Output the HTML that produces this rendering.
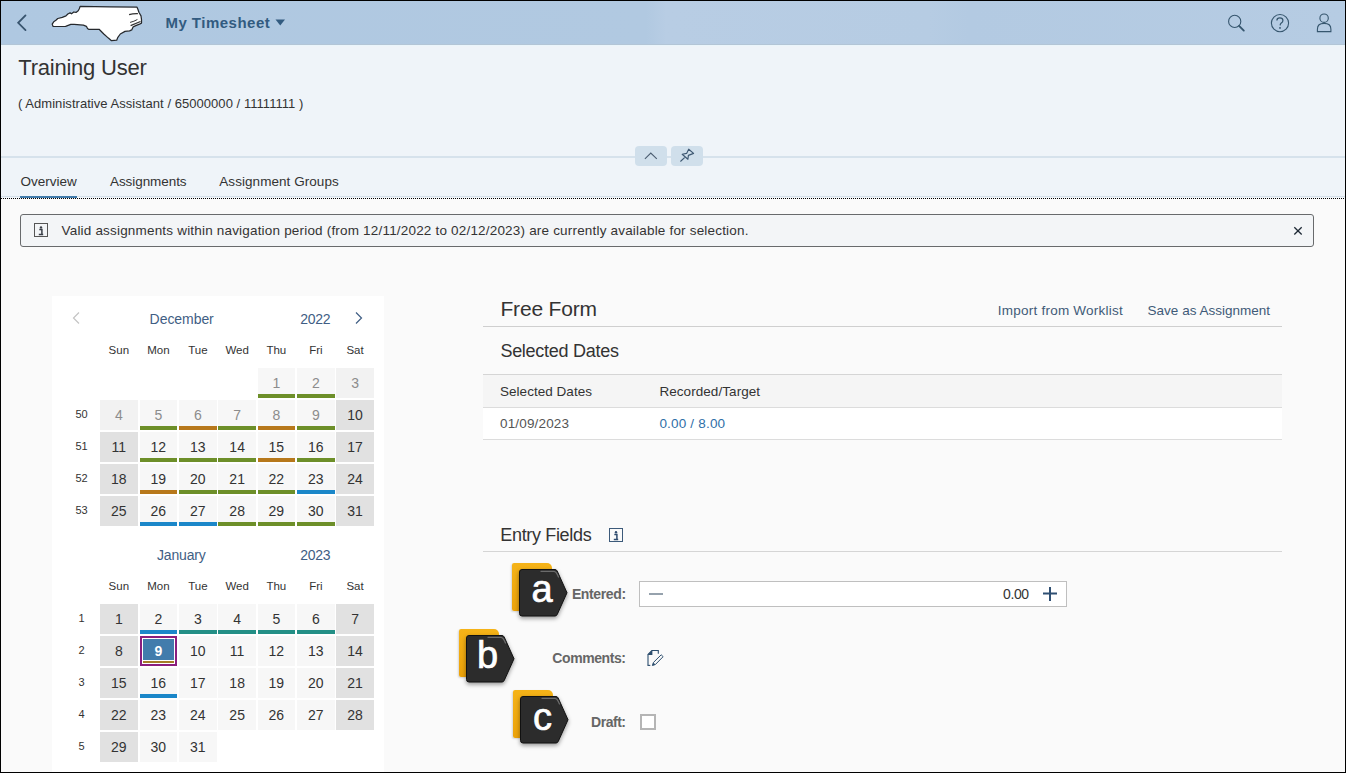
<!DOCTYPE html>
<html><head><meta charset="utf-8"><style>
html,body{margin:0;padding:0;width:1346px;height:773px;overflow:hidden;background:#fafafa;}
body{position:relative;font-family:"Liberation Sans", sans-serif;}
.t{position:absolute;white-space:nowrap;}
.r{position:absolute;}
</style></head><body>
<div class="r" style="left:0px;top:0px;width:1346px;height:773px;background:#fafafa;"></div>
<div class="r" style="left:0px;top:0px;width:1346px;height:45px;background:linear-gradient(90deg,#afc8e1 0%,#b1c9e1 48%,#b8cde4 49.5%,#b6cce3 69%,#b3cae2 72%,#b6cce3 100%);"></div>
<div class="r" style="left:0px;top:45px;width:1346px;height:153px;background:#eff4f9;"></div>
<div class="r" style="left:0px;top:44px;width:1346px;height:1px;background:#b3c5d6;"></div>
<div class="r" style="left:0px;top:45px;width:1346px;height:1px;background:#eaf5fb;"></div>
<div class="r" style="left:0px;top:196px;width:1346px;height:1px;background:#d5e0ea;"></div>
<div class="r" style="left:0px;top:156px;width:1346px;height:2px;background:#d6e2ec;"></div>
<div class="r" style="left:635px;top:146px;width:32px;height:20px;background:#d0dfeb;border-radius:4px;"></div>
<div class="r" style="left:671px;top:146px;width:32px;height:20px;background:#d0dfeb;border-radius:4px;"></div>
<div class="r" style="left:20px;top:196px;width:57px;height:2px;background:#427cac;"></div>
<div class="r" style="left:0;top:198px;width:1346px;height:0;border-top:1px dotted #000;"></div>
<svg class="r" style="left:8px;top:8px" width="30" height="30" viewBox="8 8 30 30"><path d="M25.5 15.4 L18.2 22.8 L25.5 30.1" fill="none" stroke="#38546e" stroke-width="1.8" stroke-linecap="round"/></svg>
<svg class="r" style="left:0;top:0" width="160" height="45"><polygon points="80.1,6.4 110.0,6.9 136.9,7.1 137.9,9.2 138.9,12.3 141.0,15.9 141.5,19.5 141.5,23.1 139.5,24.2 135.8,25.7 133.2,26.8 131.7,29.9 129.6,30.9 125.0,31.4 120.3,34.0 117.7,37.6 116.7,40.2 111.5,40.7 108.4,38.1 103.8,34.0 99.1,29.3 88.6,29.3 87.5,28.5 86.4,26.3 83.4,25.2 74.1,24.4 70.8,24.4 65.6,26.3 57.4,26.5 53.0,26.3 52.2,24.1 53.7,21.8 55.9,20.3 57.8,18.5 62.3,17.4 66.0,15.9 67.8,14.0 70.1,12.9 71.5,13.8 73.8,12.0 76.0,12.4 78.2,10.7 79.3,8.8" fill="#fff" stroke="#26292d" stroke-width="1.25" stroke-linejoin="round"/><path d="M129.1 14.6 Q133 13.4 137.9 13.6" fill="none" stroke="#333" stroke-width="1.2"/><path d="M130.1 22.4 Q134 21.5 137.4 19.5" fill="none" stroke="#333" stroke-width="1"/><path d="M130.6 25.6 L140.5 21.5" fill="none" stroke="#333" stroke-width="1.3"/></svg>
<div class="t" style="left:165.4px;top:15.40px;font-size:15px;line-height:15px;color:#325b80;font-weight:bold;letter-spacing:0.491px;">My Timesheet</div>
<svg class="r" style="left:275px;top:19px" width="11" height="8"><path d="M0.5 0.5 L10 0.5 L5.25 6.5 Z" fill="#325b80"/></svg>
<svg class="r" style="left:1220px;top:8px" width="120" height="30" viewBox="1220 8 120 30"><circle cx="1234.7" cy="21.4" r="6.1" fill="none" stroke="#36566e" stroke-width="1.1"/><path d="M1239.1 25.9 L1243.8 30.6" stroke="#36566e" stroke-width="1.9" stroke-linecap="round"/><circle cx="1280" cy="23.1" r="8.6" fill="none" stroke="#36566e" stroke-width="1.1"/><path d="M1276.9 20.6 Q1276.9 17.9 1279.8 17.9 Q1282.9 17.9 1282.9 20.4 Q1282.9 22 1281.3 23.1 Q1280.2 23.9 1280.1 25.4" fill="none" stroke="#36566e" stroke-width="1.25"/><circle cx="1280" cy="27.9" r="0.9" fill="#36566e"/><circle cx="1324.1" cy="18.2" r="4.2" fill="none" stroke="#36566e" stroke-width="1.1"/><path d="M1317.4 31.6 L1317.4 29.2 Q1317.4 23.4 1324.1 23.4 Q1330.9 23.4 1330.9 29.2 L1330.9 31.6 Z" fill="none" stroke="#36566e" stroke-width="1.1"/></svg>
<div class="t" style="left:18.3px;top:56.58px;font-size:22px;line-height:22px;color:#333;letter-spacing:-0.233px;">Training User</div>
<div class="t" style="left:18.0px;top:96.70px;font-size:13px;line-height:13px;color:#333;letter-spacing:0.047px;">( Administrative Assistant / 65000000 / 11111111 )</div>
<svg class="r" style="left:630px;top:140px" width="80" height="30" viewBox="630 140 80 30"><path d="M644.9 158.8 L650.8 153 L656.8 158.8" fill="none" stroke="#4b5d70" stroke-width="1.1"/><path d="M682.2 154.3 L686.6 153.4 L688.7 149.2 L693.6 153.4 L688.4 155.4 L687.9 159.3 Z M680.4 161.5 L685.1 157.1" fill="none" stroke="#3e5872" stroke-width="1.15" stroke-linejoin="round"/></svg>
<div class="t" style="left:20.4px;top:174.77px;font-size:13.5px;line-height:13.5px;color:#333;letter-spacing:0.029px;">Overview</div>
<div class="t" style="left:110.0px;top:174.77px;font-size:13.5px;line-height:13.5px;color:#333;letter-spacing:-0.07px;">Assignments</div>
<div class="t" style="left:219.3px;top:174.77px;font-size:13.5px;line-height:13.5px;color:#333;letter-spacing:0.056px;">Assignment Groups</div>
<div class="r" style="left:20px;top:214px;width:1294px;height:33px;background:#f3f5f7;box-sizing:border-box;border:1px solid #686a6c;border-radius:3px;"></div>
<div class="r" style="left:34px;top:223px;width:14px;height:14px;box-sizing:border-box;border:1.3px solid #555;"></div>
<svg class="r" style="left:0;top:0" width="60" height="250" viewBox="0 0 60 250"><circle cx="41" cy="227.4" r="1.2" fill="#3a3f48"/><path d="M39.3 229.6 L41.9 229.6 L41.9 234.3 M38.8 234.6 L43.2 234.6" fill="none" stroke="#3a3f48" stroke-width="1.5"/></svg>
<div class="t" style="left:61.5px;top:223.67px;font-size:13.5px;line-height:13.5px;color:#333;letter-spacing:0.188px;">Valid assignments within navigation period (from 12/11/2022 to 02/12/2023) are currently available for selection.</div>
<svg class="r" style="left:1290px;top:224px" width="16" height="14" viewBox="1290 224 16 14"><path d="M1294.3 227.3 L1301.7 234.5 M1301.7 227.3 L1294.3 234.5" stroke="#1f2a36" stroke-width="1.3"/></svg>
<div class="r" style="left:52px;top:296px;width:332px;height:477px;background:#ffffff;"></div>
<div class="t" style="left:149.6px;top:312.25px;font-size:14px;line-height:14px;color:#3f5e84;letter-spacing:-0.057px;">December</div>
<div class="t" style="left:300.3px;top:312.25px;font-size:14px;line-height:14px;color:#3f5e84;letter-spacing:-0.333px;">2022</div>
<div class="t" style="left:18.849999999999994px;width:200px;text-align:center;top:345.47px;font-size:11.5px;line-height:11.5px;color:#333;">Sun</div>
<div class="t" style="left:58.349999999999994px;width:200px;text-align:center;top:345.47px;font-size:11.5px;line-height:11.5px;color:#333;">Mon</div>
<div class="t" style="left:97.85px;width:200px;text-align:center;top:345.47px;font-size:11.5px;line-height:11.5px;color:#333;">Tue</div>
<div class="t" style="left:137.15px;width:200px;text-align:center;top:345.47px;font-size:11.5px;line-height:11.5px;color:#333;">Wed</div>
<div class="t" style="left:176.35000000000002px;width:200px;text-align:center;top:345.47px;font-size:11.5px;line-height:11.5px;color:#333;">Thu</div>
<div class="t" style="left:215.85000000000002px;width:200px;text-align:center;top:345.47px;font-size:11.5px;line-height:11.5px;color:#333;">Fri</div>
<div class="t" style="left:255.05px;width:200px;text-align:center;top:345.47px;font-size:11.5px;line-height:11.5px;color:#333;">Sat</div>
<div class="r" style="left:257.5px;top:368.1px;width:37.7px;height:30px;background:#f7f7f7;"></div>
<div class="r" style="left:257.5px;top:394.1px;width:37.7px;height:4px;background:#6d8f29;"></div>
<div class="t" style="left:176.35000000000002px;width:200px;text-align:center;top:376.05px;font-size:14px;line-height:14px;color:#8c8c8c;">1</div>
<div class="r" style="left:297px;top:368.1px;width:37.7px;height:30px;background:#f7f7f7;"></div>
<div class="r" style="left:297px;top:394.1px;width:37.7px;height:4px;background:#6d8f29;"></div>
<div class="t" style="left:215.85000000000002px;width:200px;text-align:center;top:376.05px;font-size:14px;line-height:14px;color:#8c8c8c;">2</div>
<div class="r" style="left:336.2px;top:368.1px;width:37.7px;height:30px;background:#f2f2f2;"></div>
<div class="t" style="left:255.05px;width:200px;text-align:center;top:376.05px;font-size:14px;line-height:14px;color:#8c8c8c;">3</div>
<div class="t" style="left:-18.5px;width:200px;text-align:center;top:408.99px;font-size:11px;line-height:11px;color:#333;">50</div>
<div class="r" style="left:100px;top:400.1px;width:37.7px;height:30px;background:#f2f2f2;"></div>
<div class="t" style="left:18.849999999999994px;width:200px;text-align:center;top:408.05px;font-size:14px;line-height:14px;color:#8c8c8c;">4</div>
<div class="r" style="left:139.5px;top:400.1px;width:37.7px;height:30px;background:#f7f7f7;"></div>
<div class="r" style="left:139.5px;top:426.1px;width:37.7px;height:4px;background:#6d8f29;"></div>
<div class="t" style="left:58.349999999999994px;width:200px;text-align:center;top:408.05px;font-size:14px;line-height:14px;color:#8c8c8c;">5</div>
<div class="r" style="left:179px;top:400.1px;width:37.7px;height:30px;background:#f7f7f7;"></div>
<div class="r" style="left:179px;top:426.1px;width:37.7px;height:4px;background:#b7781b;"></div>
<div class="t" style="left:97.85px;width:200px;text-align:center;top:408.05px;font-size:14px;line-height:14px;color:#8c8c8c;">6</div>
<div class="r" style="left:218.3px;top:400.1px;width:37.7px;height:30px;background:#f7f7f7;"></div>
<div class="r" style="left:218.3px;top:426.1px;width:37.7px;height:4px;background:#6d8f29;"></div>
<div class="t" style="left:137.15px;width:200px;text-align:center;top:408.05px;font-size:14px;line-height:14px;color:#8c8c8c;">7</div>
<div class="r" style="left:257.5px;top:400.1px;width:37.7px;height:30px;background:#f7f7f7;"></div>
<div class="r" style="left:257.5px;top:426.1px;width:37.7px;height:4px;background:#b7781b;"></div>
<div class="t" style="left:176.35000000000002px;width:200px;text-align:center;top:408.05px;font-size:14px;line-height:14px;color:#8c8c8c;">8</div>
<div class="r" style="left:297px;top:400.1px;width:37.7px;height:30px;background:#f7f7f7;"></div>
<div class="r" style="left:297px;top:426.1px;width:37.7px;height:4px;background:#6d8f29;"></div>
<div class="t" style="left:215.85000000000002px;width:200px;text-align:center;top:408.05px;font-size:14px;line-height:14px;color:#8c8c8c;">9</div>
<div class="r" style="left:336.2px;top:400.1px;width:37.7px;height:30px;background:#e1e1e1;"></div>
<div class="t" style="left:255.05px;width:200px;text-align:center;top:408.05px;font-size:14px;line-height:14px;color:#333;">10</div>
<div class="t" style="left:-18.5px;width:200px;text-align:center;top:440.99px;font-size:11px;line-height:11px;color:#333;">51</div>
<div class="r" style="left:100px;top:432.1px;width:37.7px;height:30px;background:#e1e1e1;"></div>
<div class="t" style="left:18.849999999999994px;width:200px;text-align:center;top:440.05px;font-size:14px;line-height:14px;color:#333;">11</div>
<div class="r" style="left:139.5px;top:432.1px;width:37.7px;height:30px;background:#f7f7f7;"></div>
<div class="r" style="left:139.5px;top:458.1px;width:37.7px;height:4px;background:#6d8f29;"></div>
<div class="t" style="left:58.349999999999994px;width:200px;text-align:center;top:440.05px;font-size:14px;line-height:14px;color:#333;">12</div>
<div class="r" style="left:179px;top:432.1px;width:37.7px;height:30px;background:#f7f7f7;"></div>
<div class="r" style="left:179px;top:458.1px;width:37.7px;height:4px;background:#6d8f29;"></div>
<div class="t" style="left:97.85px;width:200px;text-align:center;top:440.05px;font-size:14px;line-height:14px;color:#333;">13</div>
<div class="r" style="left:218.3px;top:432.1px;width:37.7px;height:30px;background:#f7f7f7;"></div>
<div class="r" style="left:218.3px;top:458.1px;width:37.7px;height:4px;background:#6d8f29;"></div>
<div class="t" style="left:137.15px;width:200px;text-align:center;top:440.05px;font-size:14px;line-height:14px;color:#333;">14</div>
<div class="r" style="left:257.5px;top:432.1px;width:37.7px;height:30px;background:#f7f7f7;"></div>
<div class="r" style="left:257.5px;top:458.1px;width:37.7px;height:4px;background:#b7781b;"></div>
<div class="t" style="left:176.35000000000002px;width:200px;text-align:center;top:440.05px;font-size:14px;line-height:14px;color:#333;">15</div>
<div class="r" style="left:297px;top:432.1px;width:37.7px;height:30px;background:#f7f7f7;"></div>
<div class="r" style="left:297px;top:458.1px;width:37.7px;height:4px;background:#6d8f29;"></div>
<div class="t" style="left:215.85000000000002px;width:200px;text-align:center;top:440.05px;font-size:14px;line-height:14px;color:#333;">16</div>
<div class="r" style="left:336.2px;top:432.1px;width:37.7px;height:30px;background:#e1e1e1;"></div>
<div class="t" style="left:255.05px;width:200px;text-align:center;top:440.05px;font-size:14px;line-height:14px;color:#333;">17</div>
<div class="t" style="left:-18.5px;width:200px;text-align:center;top:472.99px;font-size:11px;line-height:11px;color:#333;">52</div>
<div class="r" style="left:100px;top:464.1px;width:37.7px;height:30px;background:#e1e1e1;"></div>
<div class="t" style="left:18.849999999999994px;width:200px;text-align:center;top:472.05px;font-size:14px;line-height:14px;color:#333;">18</div>
<div class="r" style="left:139.5px;top:464.1px;width:37.7px;height:30px;background:#f7f7f7;"></div>
<div class="r" style="left:139.5px;top:490.1px;width:37.7px;height:4px;background:#b7781b;"></div>
<div class="t" style="left:58.349999999999994px;width:200px;text-align:center;top:472.05px;font-size:14px;line-height:14px;color:#333;">19</div>
<div class="r" style="left:179px;top:464.1px;width:37.7px;height:30px;background:#f7f7f7;"></div>
<div class="r" style="left:179px;top:490.1px;width:37.7px;height:4px;background:#6d8f29;"></div>
<div class="t" style="left:97.85px;width:200px;text-align:center;top:472.05px;font-size:14px;line-height:14px;color:#333;">20</div>
<div class="r" style="left:218.3px;top:464.1px;width:37.7px;height:30px;background:#f7f7f7;"></div>
<div class="r" style="left:218.3px;top:490.1px;width:37.7px;height:4px;background:#6d8f29;"></div>
<div class="t" style="left:137.15px;width:200px;text-align:center;top:472.05px;font-size:14px;line-height:14px;color:#333;">21</div>
<div class="r" style="left:257.5px;top:464.1px;width:37.7px;height:30px;background:#f7f7f7;"></div>
<div class="r" style="left:257.5px;top:490.1px;width:37.7px;height:4px;background:#6d8f29;"></div>
<div class="t" style="left:176.35000000000002px;width:200px;text-align:center;top:472.05px;font-size:14px;line-height:14px;color:#333;">22</div>
<div class="r" style="left:297px;top:464.1px;width:37.7px;height:30px;background:#f7f7f7;"></div>
<div class="r" style="left:297px;top:490.1px;width:37.7px;height:4px;background:#1b87c9;"></div>
<div class="t" style="left:215.85000000000002px;width:200px;text-align:center;top:472.05px;font-size:14px;line-height:14px;color:#333;">23</div>
<div class="r" style="left:336.2px;top:464.1px;width:37.7px;height:30px;background:#e1e1e1;"></div>
<div class="t" style="left:255.05px;width:200px;text-align:center;top:472.05px;font-size:14px;line-height:14px;color:#333;">24</div>
<div class="t" style="left:-18.5px;width:200px;text-align:center;top:504.99px;font-size:11px;line-height:11px;color:#333;">53</div>
<div class="r" style="left:100px;top:496.1px;width:37.7px;height:30px;background:#e1e1e1;"></div>
<div class="t" style="left:18.849999999999994px;width:200px;text-align:center;top:504.05px;font-size:14px;line-height:14px;color:#333;">25</div>
<div class="r" style="left:139.5px;top:496.1px;width:37.7px;height:30px;background:#f7f7f7;"></div>
<div class="r" style="left:139.5px;top:522.1px;width:37.7px;height:4px;background:#1b87c9;"></div>
<div class="t" style="left:58.349999999999994px;width:200px;text-align:center;top:504.05px;font-size:14px;line-height:14px;color:#333;">26</div>
<div class="r" style="left:179px;top:496.1px;width:37.7px;height:30px;background:#f7f7f7;"></div>
<div class="r" style="left:179px;top:522.1px;width:37.7px;height:4px;background:#1b87c9;"></div>
<div class="t" style="left:97.85px;width:200px;text-align:center;top:504.05px;font-size:14px;line-height:14px;color:#333;">27</div>
<div class="r" style="left:218.3px;top:496.1px;width:37.7px;height:30px;background:#f7f7f7;"></div>
<div class="r" style="left:218.3px;top:522.1px;width:37.7px;height:4px;background:#6d8f29;"></div>
<div class="t" style="left:137.15px;width:200px;text-align:center;top:504.05px;font-size:14px;line-height:14px;color:#333;">28</div>
<div class="r" style="left:257.5px;top:496.1px;width:37.7px;height:30px;background:#f7f7f7;"></div>
<div class="r" style="left:257.5px;top:522.1px;width:37.7px;height:4px;background:#6d8f29;"></div>
<div class="t" style="left:176.35000000000002px;width:200px;text-align:center;top:504.05px;font-size:14px;line-height:14px;color:#333;">29</div>
<div class="r" style="left:297px;top:496.1px;width:37.7px;height:30px;background:#f7f7f7;"></div>
<div class="r" style="left:297px;top:522.1px;width:37.7px;height:4px;background:#6d8f29;"></div>
<div class="t" style="left:215.85000000000002px;width:200px;text-align:center;top:504.05px;font-size:14px;line-height:14px;color:#333;">30</div>
<div class="r" style="left:336.2px;top:496.1px;width:37.7px;height:30px;background:#e1e1e1;"></div>
<div class="t" style="left:255.05px;width:200px;text-align:center;top:504.05px;font-size:14px;line-height:14px;color:#333;">31</div>
<div class="t" style="left:157.0px;top:548.15px;font-size:14px;line-height:14px;color:#3f5e84;letter-spacing:-0.183px;">January</div>
<div class="t" style="left:300.3px;top:548.15px;font-size:14px;line-height:14px;color:#3f5e84;letter-spacing:-0.333px;">2023</div>
<div class="t" style="left:18.849999999999994px;width:200px;text-align:center;top:581.37px;font-size:11.5px;line-height:11.5px;color:#333;">Sun</div>
<div class="t" style="left:58.349999999999994px;width:200px;text-align:center;top:581.37px;font-size:11.5px;line-height:11.5px;color:#333;">Mon</div>
<div class="t" style="left:97.85px;width:200px;text-align:center;top:581.37px;font-size:11.5px;line-height:11.5px;color:#333;">Tue</div>
<div class="t" style="left:137.15px;width:200px;text-align:center;top:581.37px;font-size:11.5px;line-height:11.5px;color:#333;">Wed</div>
<div class="t" style="left:176.35000000000002px;width:200px;text-align:center;top:581.37px;font-size:11.5px;line-height:11.5px;color:#333;">Thu</div>
<div class="t" style="left:215.85000000000002px;width:200px;text-align:center;top:581.37px;font-size:11.5px;line-height:11.5px;color:#333;">Fri</div>
<div class="t" style="left:255.05px;width:200px;text-align:center;top:581.37px;font-size:11.5px;line-height:11.5px;color:#333;">Sat</div>
<div class="t" style="left:-18.5px;width:200px;text-align:center;top:612.89px;font-size:11px;line-height:11px;color:#333;">1</div>
<div class="r" style="left:100px;top:604px;width:37.7px;height:30px;background:#e1e1e1;"></div>
<div class="t" style="left:18.849999999999994px;width:200px;text-align:center;top:611.95px;font-size:14px;line-height:14px;color:#333;">1</div>
<div class="r" style="left:139.5px;top:604px;width:37.7px;height:30px;background:#f7f7f7;"></div>
<div class="r" style="left:139.5px;top:630px;width:37.7px;height:4px;background:#1b87c9;"></div>
<div class="t" style="left:58.349999999999994px;width:200px;text-align:center;top:611.95px;font-size:14px;line-height:14px;color:#333;">2</div>
<div class="r" style="left:179px;top:604px;width:37.7px;height:30px;background:#f7f7f7;"></div>
<div class="r" style="left:179px;top:630px;width:37.7px;height:4px;background:#238f86;"></div>
<div class="t" style="left:97.85px;width:200px;text-align:center;top:611.95px;font-size:14px;line-height:14px;color:#333;">3</div>
<div class="r" style="left:218.3px;top:604px;width:37.7px;height:30px;background:#f7f7f7;"></div>
<div class="r" style="left:218.3px;top:630px;width:37.7px;height:4px;background:#238f86;"></div>
<div class="t" style="left:137.15px;width:200px;text-align:center;top:611.95px;font-size:14px;line-height:14px;color:#333;">4</div>
<div class="r" style="left:257.5px;top:604px;width:37.7px;height:30px;background:#f7f7f7;"></div>
<div class="r" style="left:257.5px;top:630px;width:37.7px;height:4px;background:#238f86;"></div>
<div class="t" style="left:176.35000000000002px;width:200px;text-align:center;top:611.95px;font-size:14px;line-height:14px;color:#333;">5</div>
<div class="r" style="left:297px;top:604px;width:37.7px;height:30px;background:#f7f7f7;"></div>
<div class="r" style="left:297px;top:630px;width:37.7px;height:4px;background:#238f86;"></div>
<div class="t" style="left:215.85000000000002px;width:200px;text-align:center;top:611.95px;font-size:14px;line-height:14px;color:#333;">6</div>
<div class="r" style="left:336.2px;top:604px;width:37.7px;height:30px;background:#e1e1e1;"></div>
<div class="t" style="left:255.05px;width:200px;text-align:center;top:611.95px;font-size:14px;line-height:14px;color:#333;">7</div>
<div class="t" style="left:-18.5px;width:200px;text-align:center;top:644.89px;font-size:11px;line-height:11px;color:#333;">2</div>
<div class="r" style="left:100px;top:636px;width:37.7px;height:30px;background:#e1e1e1;"></div>
<div class="t" style="left:18.849999999999994px;width:200px;text-align:center;top:643.95px;font-size:14px;line-height:14px;color:#333;">8</div>
<div class="r" style="left:139.5px;top:636px;width:37.7px;height:30px;background:#f7f7f7;"></div>
<div class="r" style="left:139.5px;top:636px;width:37.7px;height:30px;box-sizing:border-box;border:2px solid #8a1e7e;background:#fff;"></div>
<div class="r" style="left:142.5px;top:639px;width:31.700000000000003px;height:21px;background:#427cac;"></div>
<div class="r" style="left:142.5px;top:661px;width:31.700000000000003px;height:2px;background:#a57d27;"></div>
<div class="t" style="left:58.349999999999994px;width:200px;text-align:center;top:643.95px;font-size:14px;line-height:14px;color:#fff;font-weight:bold;">9</div>
<div class="r" style="left:179px;top:636px;width:37.7px;height:30px;background:#f7f7f7;"></div>
<div class="t" style="left:97.85px;width:200px;text-align:center;top:643.95px;font-size:14px;line-height:14px;color:#333;">10</div>
<div class="r" style="left:218.3px;top:636px;width:37.7px;height:30px;background:#f7f7f7;"></div>
<div class="t" style="left:137.15px;width:200px;text-align:center;top:643.95px;font-size:14px;line-height:14px;color:#333;">11</div>
<div class="r" style="left:257.5px;top:636px;width:37.7px;height:30px;background:#f7f7f7;"></div>
<div class="t" style="left:176.35000000000002px;width:200px;text-align:center;top:643.95px;font-size:14px;line-height:14px;color:#333;">12</div>
<div class="r" style="left:297px;top:636px;width:37.7px;height:30px;background:#f7f7f7;"></div>
<div class="t" style="left:215.85000000000002px;width:200px;text-align:center;top:643.95px;font-size:14px;line-height:14px;color:#333;">13</div>
<div class="r" style="left:336.2px;top:636px;width:37.7px;height:30px;background:#e1e1e1;"></div>
<div class="t" style="left:255.05px;width:200px;text-align:center;top:643.95px;font-size:14px;line-height:14px;color:#333;">14</div>
<div class="t" style="left:-18.5px;width:200px;text-align:center;top:676.89px;font-size:11px;line-height:11px;color:#333;">3</div>
<div class="r" style="left:100px;top:668px;width:37.7px;height:30px;background:#e1e1e1;"></div>
<div class="t" style="left:18.849999999999994px;width:200px;text-align:center;top:675.95px;font-size:14px;line-height:14px;color:#333;">15</div>
<div class="r" style="left:139.5px;top:668px;width:37.7px;height:30px;background:#f7f7f7;"></div>
<div class="r" style="left:139.5px;top:694px;width:37.7px;height:4px;background:#1b87c9;"></div>
<div class="t" style="left:58.349999999999994px;width:200px;text-align:center;top:675.95px;font-size:14px;line-height:14px;color:#333;">16</div>
<div class="r" style="left:179px;top:668px;width:37.7px;height:30px;background:#f7f7f7;"></div>
<div class="t" style="left:97.85px;width:200px;text-align:center;top:675.95px;font-size:14px;line-height:14px;color:#333;">17</div>
<div class="r" style="left:218.3px;top:668px;width:37.7px;height:30px;background:#f7f7f7;"></div>
<div class="t" style="left:137.15px;width:200px;text-align:center;top:675.95px;font-size:14px;line-height:14px;color:#333;">18</div>
<div class="r" style="left:257.5px;top:668px;width:37.7px;height:30px;background:#f7f7f7;"></div>
<div class="t" style="left:176.35000000000002px;width:200px;text-align:center;top:675.95px;font-size:14px;line-height:14px;color:#333;">19</div>
<div class="r" style="left:297px;top:668px;width:37.7px;height:30px;background:#f7f7f7;"></div>
<div class="t" style="left:215.85000000000002px;width:200px;text-align:center;top:675.95px;font-size:14px;line-height:14px;color:#333;">20</div>
<div class="r" style="left:336.2px;top:668px;width:37.7px;height:30px;background:#e1e1e1;"></div>
<div class="t" style="left:255.05px;width:200px;text-align:center;top:675.95px;font-size:14px;line-height:14px;color:#333;">21</div>
<div class="t" style="left:-18.5px;width:200px;text-align:center;top:708.89px;font-size:11px;line-height:11px;color:#333;">4</div>
<div class="r" style="left:100px;top:700px;width:37.7px;height:30px;background:#e1e1e1;"></div>
<div class="t" style="left:18.849999999999994px;width:200px;text-align:center;top:707.95px;font-size:14px;line-height:14px;color:#333;">22</div>
<div class="r" style="left:139.5px;top:700px;width:37.7px;height:30px;background:#f7f7f7;"></div>
<div class="t" style="left:58.349999999999994px;width:200px;text-align:center;top:707.95px;font-size:14px;line-height:14px;color:#333;">23</div>
<div class="r" style="left:179px;top:700px;width:37.7px;height:30px;background:#f7f7f7;"></div>
<div class="t" style="left:97.85px;width:200px;text-align:center;top:707.95px;font-size:14px;line-height:14px;color:#333;">24</div>
<div class="r" style="left:218.3px;top:700px;width:37.7px;height:30px;background:#f7f7f7;"></div>
<div class="t" style="left:137.15px;width:200px;text-align:center;top:707.95px;font-size:14px;line-height:14px;color:#333;">25</div>
<div class="r" style="left:257.5px;top:700px;width:37.7px;height:30px;background:#f7f7f7;"></div>
<div class="t" style="left:176.35000000000002px;width:200px;text-align:center;top:707.95px;font-size:14px;line-height:14px;color:#333;">26</div>
<div class="r" style="left:297px;top:700px;width:37.7px;height:30px;background:#f7f7f7;"></div>
<div class="t" style="left:215.85000000000002px;width:200px;text-align:center;top:707.95px;font-size:14px;line-height:14px;color:#333;">27</div>
<div class="r" style="left:336.2px;top:700px;width:37.7px;height:30px;background:#e1e1e1;"></div>
<div class="t" style="left:255.05px;width:200px;text-align:center;top:707.95px;font-size:14px;line-height:14px;color:#333;">28</div>
<div class="t" style="left:-18.5px;width:200px;text-align:center;top:740.89px;font-size:11px;line-height:11px;color:#333;">5</div>
<div class="r" style="left:100px;top:732px;width:37.7px;height:30px;background:#e1e1e1;"></div>
<div class="t" style="left:18.849999999999994px;width:200px;text-align:center;top:739.95px;font-size:14px;line-height:14px;color:#333;">29</div>
<div class="r" style="left:139.5px;top:732px;width:37.7px;height:30px;background:#f7f7f7;"></div>
<div class="t" style="left:58.349999999999994px;width:200px;text-align:center;top:739.95px;font-size:14px;line-height:14px;color:#333;">30</div>
<div class="r" style="left:179px;top:732px;width:37.7px;height:30px;background:#f7f7f7;"></div>
<div class="t" style="left:97.85px;width:200px;text-align:center;top:739.95px;font-size:14px;line-height:14px;color:#333;">31</div>
<svg class="r" style="left:70px;top:310px" width="12" height="16"><path d="M9 2.5 L3.5 8 L9 13.5" fill="none" stroke="#c4c4c4" stroke-width="1.2"/></svg>
<svg class="r" style="left:353px;top:310px" width="12" height="16"><path d="M3 2.5 L8.5 8 L3 13.5" fill="none" stroke="#3f5e84" stroke-width="1.2"/></svg>
<div class="t" style="left:500.4px;top:298.02px;font-size:21px;line-height:21px;color:#333;letter-spacing:-0.162px;">Free Form</div>
<div class="t" style="left:997.8px;top:304.07px;font-size:13.5px;line-height:13.5px;color:#3f5a78;letter-spacing:0.232px;">Import from Worklist</div>
<div class="t" style="left:1147.6px;top:304.07px;font-size:13.5px;line-height:13.5px;color:#3f5a78;letter-spacing:0.006px;">Save as Assignment</div>
<div class="r" style="left:483px;top:326px;width:799px;height:1px;background:#cfcfcf;"></div>
<div class="t" style="left:500.4px;top:342.06px;font-size:18px;line-height:18px;color:#333;letter-spacing:-0.269px;">Selected Dates</div>
<div class="r" style="left:483px;top:374px;width:799px;height:1px;background:#d5d5d5;"></div>
<div class="r" style="left:483px;top:375px;width:799px;height:32px;background:#f5f5f5;"></div>
<div class="r" style="left:483px;top:407px;width:799px;height:1px;background:#dcdcdc;"></div>
<div class="r" style="left:483px;top:408px;width:799px;height:31px;background:#ffffff;"></div>
<div class="r" style="left:483px;top:439px;width:799px;height:1px;background:#dcdcdc;"></div>
<div class="t" style="left:500.0px;top:385.27px;font-size:13.5px;line-height:13.5px;color:#333;letter-spacing:0.031px;">Selected Dates</div>
<div class="t" style="left:659.4px;top:385.27px;font-size:13.5px;line-height:13.5px;color:#333;letter-spacing:0.064px;">Recorded/Target</div>
<div class="t" style="left:500.0px;top:416.87px;font-size:13.5px;line-height:13.5px;color:#555;letter-spacing:0.156px;">01/09/2023</div>
<div class="t" style="left:659.4px;top:416.87px;font-size:13.5px;line-height:13.5px;color:#2f6fa8;letter-spacing:0.19px;">0.00 / 8.00</div>
<div class="t" style="left:500.3px;top:525.66px;font-size:18px;line-height:18px;color:#333;letter-spacing:-0.336px;">Entry Fields</div>
<div class="r" style="left:609px;top:528px;width:14px;height:14px;box-sizing:border-box;border:1.3px solid #3c5a7a;"></div>
<svg class="r" style="left:590px;top:520px" width="40" height="30" viewBox="590 520 40 30"><circle cx="616" cy="532.2" r="1.2" fill="#2f4b6e"/><path d="M614.3 534.4 L616.9 534.4 L616.9 539.3 M613.8 539.6 L618.2 539.6" fill="none" stroke="#2f4b6e" stroke-width="1.5"/></svg>
<div class="r" style="left:483px;top:551px;width:799px;height:1px;background:#d5d5d5;"></div>
<div class="t" style="left:571.9px;top:586.65px;font-size:14px;line-height:14px;color:#666;font-weight:bold;letter-spacing:-0.371px;">Entered:</div>
<div class="t" style="left:552.3px;top:651.15px;font-size:14px;line-height:14px;color:#666;font-weight:bold;letter-spacing:-0.412px;">Comments:</div>
<div class="t" style="left:591.1px;top:714.55px;font-size:14px;line-height:14px;color:#666;font-weight:bold;letter-spacing:-0.48px;">Draft:</div>
<div class="r" style="left:639px;top:581px;width:428px;height:26px;background:#fff;box-sizing:border-box;border:1px solid #bfbfbf;"></div>
<div class="r" style="left:649px;top:593px;width:14px;height:1.7px;background:#96a2ad;"></div>
<div class="t" style="left:1003.0px;top:586.85px;font-size:14px;line-height:14px;color:#333;letter-spacing:-0.4px;">0.00</div>
<svg class="r" style="left:1042px;top:586px" width="16" height="16"><path d="M1 7.5 L15 7.5 M8 1 L8 15" stroke="#2f4f73" stroke-width="2"/></svg>
<svg class="r" style="left:640px;top:644px" width="30" height="28" viewBox="640 644 30 28"><path d="M648 665.2 L648 654.4 L651.9 650.5 L658.3 650.5 L658.3 653.8" fill="none" stroke="#2d4e6e" stroke-width="1.1"/><path d="M647.5 654.9 L652.4 650 L652.4 654.9 Z" fill="#2d4e6e"/><path d="M647.5 665.4 L650.3 665.4" stroke="#2d4e6e" stroke-width="1.1"/><path d="M652.4 665.5 L653.4 662.5 L661.2 654.8 L663.1 656.7 L655.4 664.5 Z" fill="none" stroke="#2d4e6e" stroke-width="1" stroke-linejoin="round"/><path d="M652.4 665.5 L653.4 662.5 L655.4 664.5 Z" fill="#2d4e6e"/></svg>
<div class="r" style="left:640px;top:714px;width:16px;height:16px;background:#fff;box-sizing:border-box;border:2px solid #b5b5b5;"></div>
<div class="r" style="left:512px;top:563px;width:40px;height:48px;background:linear-gradient(#f5b318,#eba20a);border-radius:2px 5px 1px 2px;box-shadow:-1px 1px 2px rgba(0,0,0,0.15);"></div>
<svg class="r" style="left:514.5px;top:564.5px;filter:drop-shadow(0 2.5px 2px rgba(0,0,0,0.4));" width="60" height="60" viewBox="-4 -4 60 60"><path d="M0.5 3 Q0.5 0.5 3 0.5 L36 0.5 Q37.5 0.5 38.2 2 L48 23.75 L38.2 45.5 Q37.5 47 36 47 L3 47 Q0.5 47 0.5 44.5 Z" fill="#2c2c2c" stroke="#111" stroke-width="1"/><path d="M22 2.3 L35.2 2.3 Q37 2.5 38.2 5.2 L39.5 8" fill="none" stroke="rgba(255,255,255,0.3)" stroke-width="1.3" stroke-linecap="round"/></svg>
<div class="t" style="left:531.4px;top:570.33px;font-size:38px;line-height:38px;color:#fff;-webkit-text-stroke:0.7px #fff;">a</div>
<div class="r" style="left:459px;top:629px;width:40px;height:48px;background:linear-gradient(#f5b318,#eba20a);border-radius:2px 5px 1px 2px;box-shadow:-1px 1px 2px rgba(0,0,0,0.15);"></div>
<svg class="r" style="left:461.5px;top:630.5px;filter:drop-shadow(0 2.5px 2px rgba(0,0,0,0.4));" width="60" height="60" viewBox="-4 -4 60 60"><path d="M0.5 3 Q0.5 0.5 3 0.5 L36 0.5 Q37.5 0.5 38.2 2 L48 23.75 L38.2 45.5 Q37.5 47 36 47 L3 47 Q0.5 47 0.5 44.5 Z" fill="#2c2c2c" stroke="#111" stroke-width="1"/><path d="M22 2.3 L35.2 2.3 Q37 2.5 38.2 5.2 L39.5 8" fill="none" stroke="rgba(255,255,255,0.3)" stroke-width="1.3" stroke-linecap="round"/></svg>
<div class="t" style="left:476.95px;top:636.33px;font-size:38px;line-height:38px;color:#fff;-webkit-text-stroke:0.7px #fff;">b</div>
<div class="r" style="left:513px;top:690px;width:40px;height:48px;background:linear-gradient(#f5b318,#eba20a);border-radius:2px 5px 1px 2px;box-shadow:-1px 1px 2px rgba(0,0,0,0.15);"></div>
<svg class="r" style="left:515.5px;top:691.5px;filter:drop-shadow(0 2.5px 2px rgba(0,0,0,0.4));" width="60" height="60" viewBox="-4 -4 60 60"><path d="M0.5 3 Q0.5 0.5 3 0.5 L36 0.5 Q37.5 0.5 38.2 2 L48 23.75 L38.2 45.5 Q37.5 47 36 47 L3 47 Q0.5 47 0.5 44.5 Z" fill="#2c2c2c" stroke="#111" stroke-width="1"/><path d="M22 2.3 L35.2 2.3 Q37 2.5 38.2 5.2 L39.5 8" fill="none" stroke="rgba(255,255,255,0.3)" stroke-width="1.3" stroke-linecap="round"/></svg>
<div class="t" style="left:533.0px;top:698.03px;font-size:38px;line-height:38px;color:#fff;-webkit-text-stroke:0.7px #fff;">c</div>
<div class="r" style="left:0;top:0;width:1346px;height:773px;box-sizing:border-box;border-top:1px solid #000;border-left:1px solid #000;border-right:1px solid #000;border-bottom:1px solid #000;"></div>
</body></html>
